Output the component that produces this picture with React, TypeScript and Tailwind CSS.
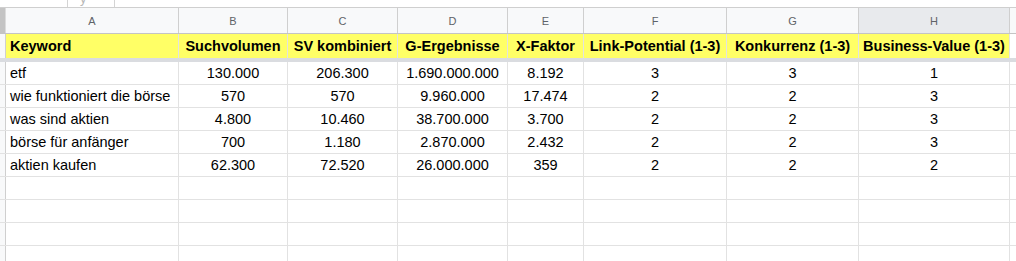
import React from "react";

const cols = [
  { letter: "A", w: "w-[173px]", head: "Keyword", align: "left" },
  { letter: "B", w: "w-[109px]", head: "Suchvolumen", align: "center" },
  { letter: "C", w: "w-[110px]", head: "SV kombiniert", align: "center" },
  { letter: "D", w: "w-[110px]", head: "G-Ergebnisse", align: "center" },
  { letter: "E", w: "w-[76px]", head: "X-Faktor", align: "center" },
  { letter: "F", w: "w-[143px]", head: "Link-Potential (1-3)", align: "center" },
  { letter: "G", w: "w-[132px]", head: "Konkurrenz (1-3)", align: "center" },
  { letter: "H", w: "w-[151px]", head: "Business-Value (1-3)", align: "center" },
];

const rows: string[][] = [
  ["etf", "130.000", "206.300", "1.690.000.000", "8.192", "3", "3", "1"],
  ["wie funktioniert die börse", "570", "570", "9.960.000", "17.474", "2", "2", "3"],
  ["was sind aktien", "4.800", "10.460", "38.700.000", "3.700", "2", "2", "3"],
  ["börse für anfänger", "700", "1.180", "2.870.000", "2.432", "2", "2", "3"],
  ["aktien kaufen", "62.300", "72.520", "26.000.000", "359", "2", "2", "2"],
  ["", "", "", "", "", "", "", ""],
  ["", "", "", "", "", "", "", ""],
  ["", "", "", "", "", "", "", ""],
  ["", "", "", "", "", "", "", ""],
];

export default function App() {
  return (
    <div
      className="w-[1016px] h-[261px] overflow-hidden bg-white text-black"
      style={{ fontFamily: '"Liberation Sans", Arial, sans-serif' }}
    >
      {/* top strip (formula bar remnant) */}
      <div className="flex h-[8px] border-b border-[#cfcfcf] overflow-hidden">
        <div className="w-[67px]" />
        <div className="w-px h-full bg-[#d4d4d4]" />
        <div className="w-[12px]" />
        <span className="text-[13px] leading-[13px] text-[#b8b8b8] -mt-[8px]">y</span>
        <div className="w-[27px]" />
        <div className="w-px h-full bg-[#d4d4d4]" />
      </div>

      {/* column headers */}
      <div className="flex h-[26px] border-b border-[#c4c4c4] bg-[#f8f9fa]">
        <div className="w-[6px] shrink-0 bg-[#c4c4c4] border-r border-[#dcdcdc]" />
        {cols.map((c) => (
          <div
            key={c.letter}
            className={`${c.w} shrink-0 border-r border-[#cfcfcf] flex items-center justify-center pt-px text-[11px] text-[#5f6368] ${
              c.letter === "H" ? "bg-[#e8eaed]" : ""
            }`}
          >
            {c.letter}
          </div>
        ))}
        <div className="flex-1" />
      </div>

      {/* yellow header row */}
      <div className="flex h-[24px]">
        <div className="w-[6px] shrink-0 bg-[#f8f9fa] border-r border-[#cfcfcf]" />
        {cols.map((c) => (
          <div
            key={c.letter}
            className={`${c.w} shrink-0 border-r border-[#e2e2e2] bg-[#ffff66] flex items-center pt-px font-bold text-[14.5px] whitespace-nowrap overflow-hidden ${
              c.align === "left" ? "justify-start pl-[4px]" : "justify-center"
            }`}
          >
            {c.head}
          </div>
        ))}
        <div className="flex-1" />
      </div>

      {/* frozen divider */}
      <div className="h-[4px] bg-[#dadce0]" />

      {/* body rows */}
      {rows.map((r, i) => (
        <div key={i} className="flex h-[23px] border-b border-[#e2e2e2]">
          <div className="w-[6px] shrink-0 bg-[#f8f9fa] border-r border-[#cfcfcf]" />
          {cols.map((c, j) => (
            <div
              key={c.letter}
              className={`${c.w} shrink-0 border-r border-[#e2e2e2] flex items-center pt-px text-[14.5px] whitespace-nowrap overflow-hidden ${
                c.align === "left" ? "justify-start pl-[4px]" : "justify-center"
              }`}
            >
              {r[j]}
            </div>
          ))}
          <div className="flex-1" />
        </div>
      ))}
    </div>
  );
}
